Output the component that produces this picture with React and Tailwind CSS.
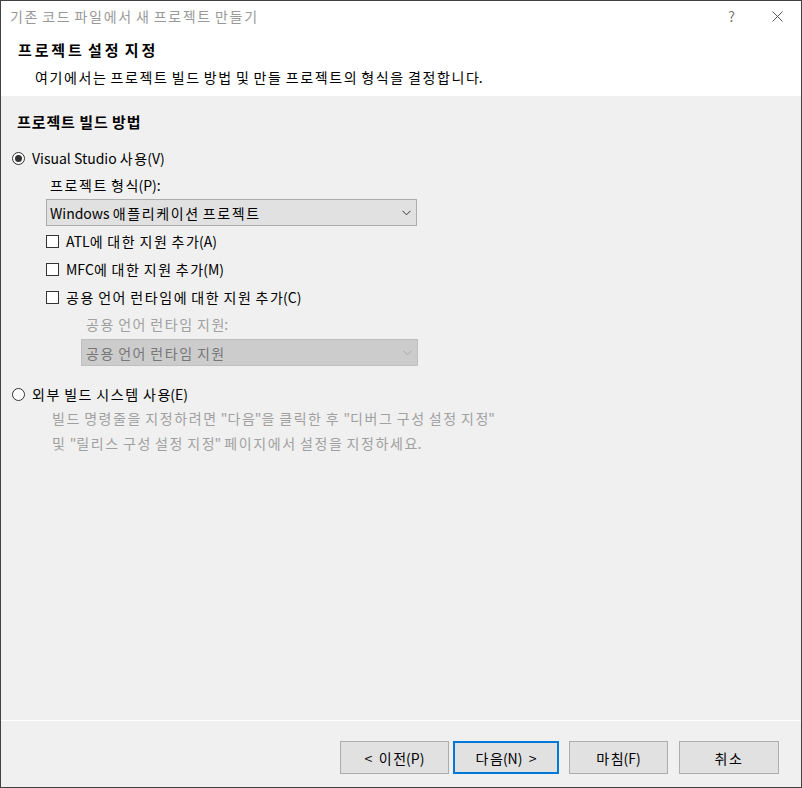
import React from "react";

const font = { fontFamily: '"Noto Sans CJK KR", "Noto Sans", sans-serif' };

// hangul runs get a little extra tracking so they take the width of the original UI font.
// when a run butts against punctuation, its last glyph stays untracked
const H = ({ children, tr = "tracking-[0.115em]" }) => {
  const parts = String(children).split(/([\uAC00-\uD7A3]+)/);
  return (
    <span>
      {parts.map((part, i) => {
        if (i % 2 === 0) return part;
        const next = parts[i + 1] || "";
        const tight = next.length > 0 && next[0] !== " ";
        if (!tight) {
          return (
            <span key={i} className={tr}>
              {part}
            </span>
          );
        }
        return (
          <React.Fragment key={i}>
            <span className={tr}>{part.slice(0, -1)}</span>
            {part.slice(-1)}
          </React.Fragment>
        );
      })}
    </span>
  );
};

// windows 10 style chevron for combo boxes
const Chevron = ({ color = "#333" }) => (
  <svg width="9" height="6" viewBox="0 0 9 6" fill="none">
    <path d="M0.5 0.8 L4.5 4.8 L8.5 0.8" stroke={color} strokeWidth="1" />
  </svg>
);

const Radio = ({ checked }) => (
  <span className="flex h-[13px] w-[13px] items-center justify-center rounded-full border border-[#333] bg-white">
    {checked && <span className="h-[7px] w-[7px] rounded-full bg-[#333]" />}
  </span>
);

const Check = () => (
  <span className="block h-[13px] w-[13px] border border-[#333] bg-white" />
);

const CheckRow = ({ label }) => (
  <div className="flex h-5 items-center">
    <Check />
    <span className="ml-[7px]">
      <H>{label}</H>
    </span>
  </div>
);

const Button = ({ children, primary, w }) => (
  <button
    className={
      "flex h-[33px] items-center justify-center bg-[#e1e1e1] text-[14px] text-black " +
      (primary ? "border-2 border-[#0078d7] " : "border border-[#adadad] ") +
      w
    }
  >
    <H>{children}</H>
  </button>
);

export default function App() {
  return (
    <div
      className="flex h-[788px] w-[802px] flex-col border border-[#434343] bg-[#f0f0f0] text-[14px] leading-5 text-black"
      style={font}
    >
      {/* title bar */}
      <div className="flex h-[30px] items-center bg-white pl-[9px]">
        <span className="text-[#999]">
          <H tr="tracking-[0.12em]">기존 코드 파일에서 새 프로젝트 만들기</H>
        </span>
        <span className="ml-auto mr-[37px] text-[#777]">?</span>
        <svg width="11" height="11" viewBox="0 0 11 11" className="mr-[18px]">
          <path d="M0.5 0.5 L10.5 10.5 M10.5 0.5 L0.5 10.5" stroke="#555" strokeWidth="1" />
        </svg>
      </div>

      {/* header */}
      <div className="h-[65px] bg-white pt-[9px]">
        <div className="pl-[17px] text-[15px] font-bold leading-5">
          <H tr="tracking-[0.19em]">프로젝트 설정 지정</H>
        </div>
        <div className="mt-[7px] pl-[34px]">
          <H>여기에서는 프로젝트 빌드 방법 및 만들 프로젝트의 형식을 결정합니다.</H>
        </div>
      </div>

      {/* body */}
      <div className="flex-1 pt-[16px]">
        <div className="pl-[16px] text-[15px] font-bold">
          <H tr="tracking-[0.06em]">프로젝트 빌드 방법</H>
        </div>

        <div className="mt-[16px] flex h-5 items-center pl-[11px]">
          <Radio checked />
          <span className="ml-[7px]">
            <H>Visual Studio 사용(V)</H>
          </span>
        </div>

        <div className="pl-[45px]">
          <div className="mt-[7px] pl-[4px]">
            <H>프로젝트 형식(P):</H>
          </div>
          <div className="mt-[4px] flex h-[27px] w-[371px] items-center border border-[#adadad] bg-[#e1e1e1] pl-[3px] pr-[5px]">
            <H>Windows 애플리케이션 프로젝트</H>
            <span className="ml-auto">
              <Chevron />
            </span>
          </div>

          <div className="mt-[5px] flex flex-col gap-2">
            <CheckRow label="ATL에 대한 지원 추가(A)" />
            <CheckRow label="MFC에 대한 지원 추가(M)" />
            <CheckRow label="공용 언어 런타임에 대한 지원 추가(C)" />
          </div>

          <div className="pl-[35px]">
            <div className="mt-[7px] pl-[5px] text-[#a0a0a0]">
              <H>공용 언어 런타임 지원:</H>
            </div>
            <div className="mt-[5px] flex h-[27px] w-[337px] items-center border border-[#bfbfbf] bg-[#cccccc] pl-[4px] pr-[5px] text-[#777]">
              <H>공용 언어 런타임 지원</H>
              <span className="ml-auto">
                <Chevron color="#a8a8a8" />
              </span>
            </div>
          </div>
        </div>

        <div className="mt-[18px] flex h-5 items-center pl-[11px]">
          <Radio />
          <span className="ml-[7px]">
            <H>외부 빌드 시스템 사용(E)</H>
          </span>
        </div>
        <div className="mt-[2px] pl-[51px] leading-[25px] text-[#a0a0a0]">
          <div>
            <H>빌드 명령줄을 지정하려면 "다음"을 클릭한 후 "디버그 구성 설정 지정"</H>
          </div>
          <div>
            <H>및 "릴리스 구성 설정 지정" 페이지에서 설정을 지정하세요.</H>
          </div>
        </div>
      </div>

      {/* footer */}
      <div className="h-px bg-white" />
      <div className="flex h-[66px] items-start pl-[339px] pt-[20px]">
        <Button w="w-[109px]">{"<\u00a0 이전(P)"}</Button>
        <Button primary w="ml-[4px] w-[106px]">{"다음(N) \u00a0>"}</Button>
        <Button w="ml-[10px] w-[99px]">마침(F)</Button>
        <Button w="ml-[11px] w-[100px]">취소</Button>
      </div>
    </div>
  );
}
